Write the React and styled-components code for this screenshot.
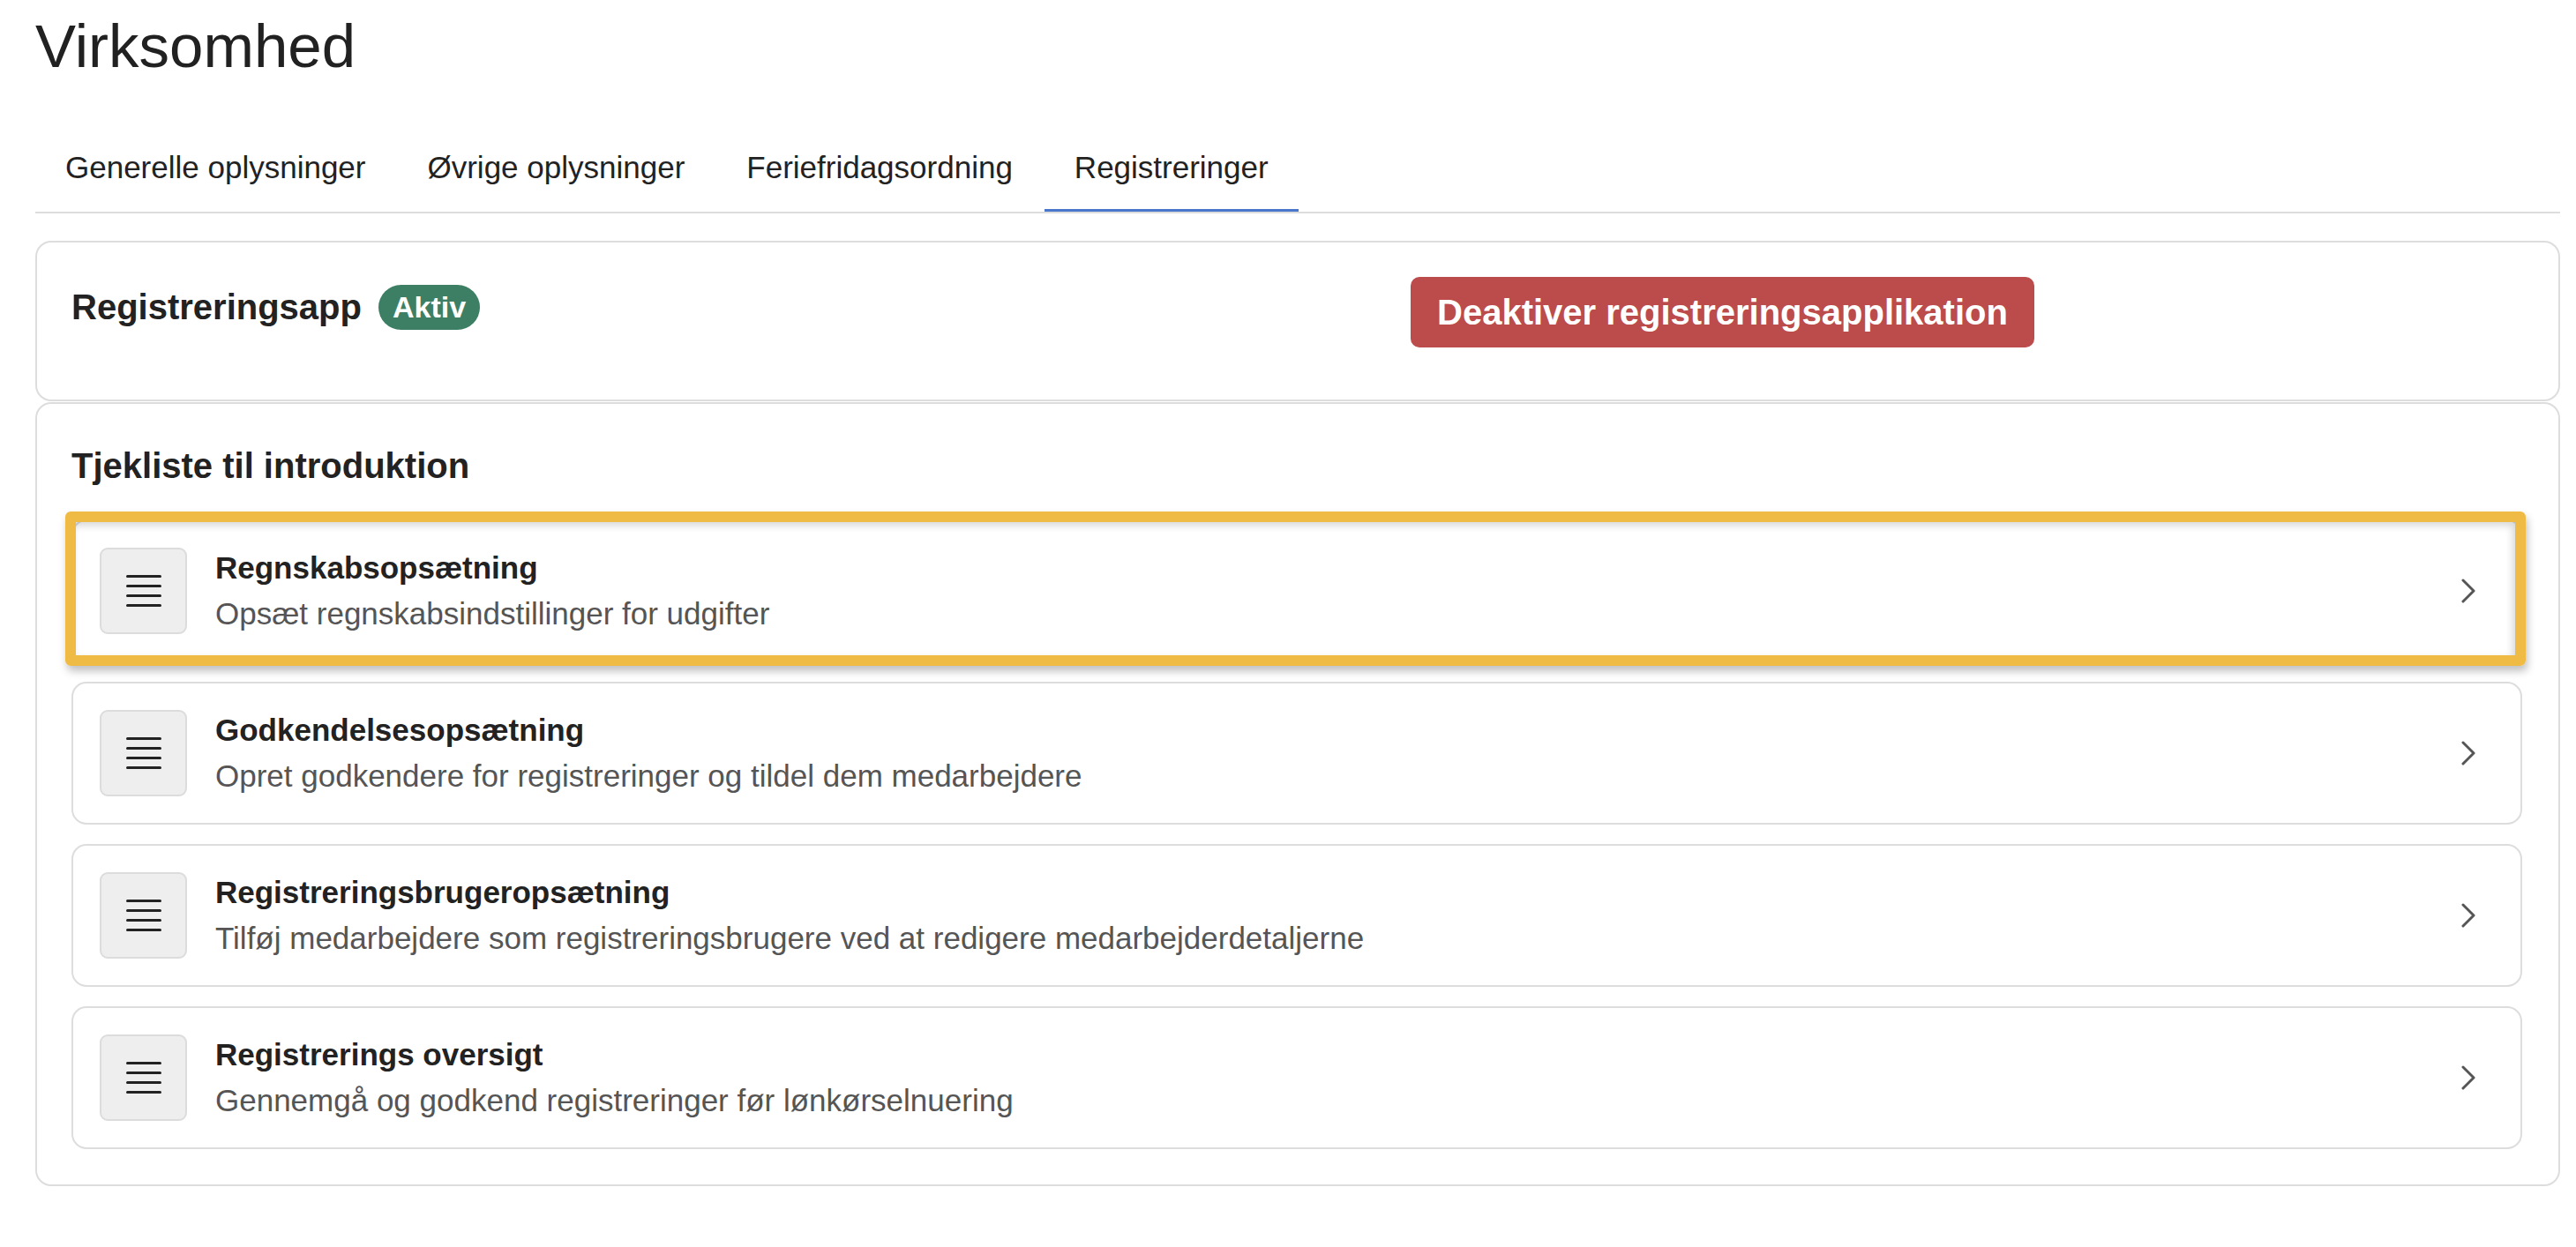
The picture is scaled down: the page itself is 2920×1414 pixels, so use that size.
import React from 'react';
import styled, { createGlobalStyle } from 'styled-components';

const GlobalStyle = createGlobalStyle`
  body {
    margin: 0;
    background: #fff;
    color: #222;
    font-family: "Liberation Sans", Arial, Helvetica, sans-serif;
  }
`;

const Page = styled.div`
  padding: 12px 18px 0 40px;
`;

const Title = styled.h1`
  margin: 0;
  font-size: 69px;
  font-weight: 400;
  line-height: 1.2;
  color: #212121;
`;

const Tabs = styled.nav`
  display: flex;
  gap: 2px;
  margin-top: 47px;
  border-bottom: 2px solid #dddddd;
`;

const Tab = styled.div`
  padding: 22px 34px 21px;
  font-size: 35px;
  line-height: 1.5;
  color: #222;
  border-bottom: 3px solid ${props => props.active ? '#4a76cc' : 'transparent'};
`;

const Card = styled.section`
  border: 2px solid #dddddd;
  border-radius: 18px;
  background: #fff;
  margin-top: ${props => props.gap}px;
`;

const AppCard = styled(Card)`
  display: grid;
  grid-template-columns: 1518px auto;
  align-items: start;
  padding: 39px 41px 59px 39px;
`;

const AppTitleRow = styled.div`
  display: flex;
  align-items: center;
  gap: 19px;
  margin-top: 9px;
`;

const AppTitle = styled.span`
  font-size: 40px;
  font-weight: 700;
  line-height: 51px;
`;

const Badge = styled.span`
  display: inline-flex;
  align-items: center;
  height: 51px;
  padding: 0 16px;
  border-radius: 26px;
  background: #3d7f64;
  color: #fff;
  font-size: 34px;
  font-weight: 700;
`;

const DangerButton = styled.button`
  justify-self: start;
  height: 80px;
  padding: 10px 30px;
  border: 0;
  border-radius: 10px;
  background: #bc4b4b;
  color: #fff;
  font-family: inherit;
  font-size: 40px;
  font-weight: 700;
  line-height: 1.5;
  cursor: pointer;
`;

const ChecklistCard = styled(Card)`
  padding: 40px 41px 40px 39px;
`;

const Heading = styled.h2`
  margin: 0 0 31px;
  font-size: 40px;
  font-weight: 700;
  line-height: 1.5;
`;

const List = styled.div`
  display: flex;
  flex-direction: column;
  gap: 22px;
`;

const Item = styled.div`
  position: relative;
  box-sizing: border-box;
  height: 162px;
  display: flex;
  align-items: center;
  padding: 0 51px 0 30px;
  border: 2px solid #dddddd;
  border-radius: 17px;
  background: #fff;
`;

const Highlight = styled.div`
  position: absolute;
  top: -11px;
  left: -9px;
  right: -6px;
  bottom: -6px;
  border: 12px solid #f0bb44;
  border-radius: 6px;
  box-shadow: 2px 6px 10px rgba(0, 0, 0, 0.25), inset -3px 4px 8px rgba(0, 0, 0, 0.16);
  pointer-events: none;
`;

const IconBox = styled.div`
  flex: none;
  box-sizing: border-box;
  width: 99px;
  height: 98px;
  display: flex;
  align-items: center;
  justify-content: center;
  border: 2px solid #dcdcdc;
  border-radius: 9px;
  background: #eeeeee;
`;

const ItemText = styled.div`
  flex: 1;
  margin-left: 32px;
  line-height: 1.5;
  font-size: 35px;
`;

const ItemTitle = styled.div`
  font-weight: 700;
  color: #222;
`;

const ItemDesc = styled.div`
  color: #555;
`;

const ListIcon = () => (
  <svg width="40" height="40" viewBox="0 0 40 40">
    {[3.5, 14.5, 25.5, 36.5].map(y => (
      <line key={y} x1="1.5" y1={y} x2="38.5" y2={y} stroke="#222" strokeWidth="3" strokeLinecap="round" />
    ))}
  </svg>
);

const Chevron = () => (
  <svg width="16" height="28" viewBox="0 0 16 28">
    <polyline points="2,2 14,14 2,26" fill="none" stroke="#555" strokeWidth="3" strokeLinecap="round" strokeLinejoin="round" />
  </svg>
);

const tabs = ['Generelle oplysninger', 'Øvrige oplysninger', 'Feriefridagsordning', 'Registreringer'];

const steps = [
  { title: 'Regnskabsopsætning', desc: 'Opsæt regnskabsindstillinger for udgifter', highlighted: true },
  { title: 'Godkendelsesopsætning', desc: 'Opret godkendere for registreringer og tildel dem medarbejdere' },
  { title: 'Registreringsbrugeropsætning', desc: 'Tilføj medarbejdere som registreringsbrugere ved at redigere medarbejderdetaljerne' },
  { title: 'Registrerings oversigt', desc: 'Gennemgå og godkend registreringer før lønkørselnuering' },
];

const App = () => (
  <Page>
    <GlobalStyle />
    <Title>Virksomhed</Title>
    <Tabs>
      {tabs.map(t => (
        <Tab key={t} active={t === 'Registreringer'}>{t}</Tab>
      ))}
    </Tabs>

    <AppCard gap={31}>
      <AppTitleRow>
        <AppTitle>Registreringsapp</AppTitle>
        <Badge>Aktiv</Badge>
      </AppTitleRow>
      <DangerButton>Deaktiver registreringsapplikation</DangerButton>
    </AppCard>

    <ChecklistCard gap={1}>
      <Heading>Tjekliste til introduktion</Heading>
      <List>
        {steps.map(s => (
          <Item key={s.title}>
            <IconBox><ListIcon /></IconBox>
            <ItemText>
              <ItemTitle>{s.title}</ItemTitle>
              <ItemDesc>{s.desc}</ItemDesc>
            </ItemText>
            <Chevron />
            {s.highlighted && <Highlight />}
          </Item>
        ))}
      </List>
    </ChecklistCard>
  </Page>
);

export default App;
